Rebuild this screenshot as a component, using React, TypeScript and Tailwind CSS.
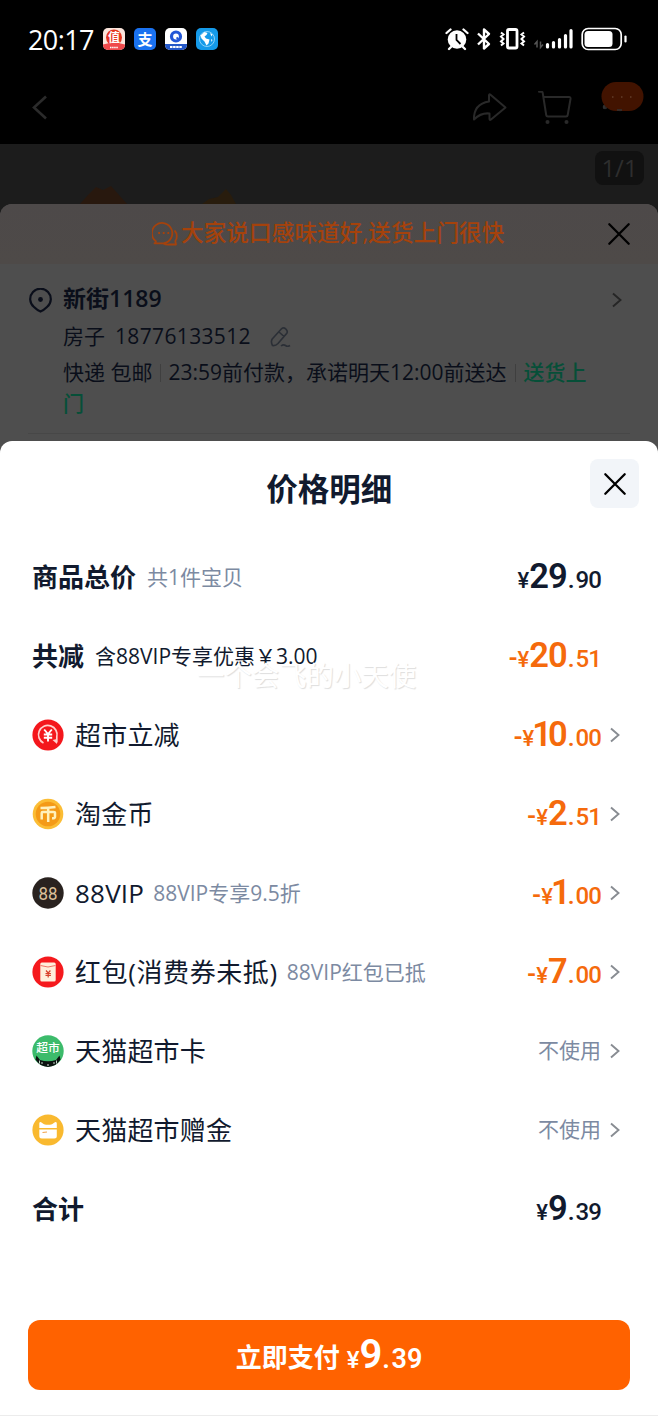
import type { ReactNode } from "react";
import clsx from "clsx";

type Row = {
  label: string;
  note?: string;
  noteDark?: boolean;
  strong?: boolean;
  icon?: ReactNode;
  minus?: boolean;
  price?: [string, string];
  text?: string;
  link?: boolean;
};

const CJK = "Noto Sans CJK SC";

const CouponIcon = () => (
  <svg width="32" height="32" viewBox="0 0 32 32">
    <circle cx="16" cy="16" r="15.6" fill="#f4171c" />
    <path d="M11.500 24A9.300 9.300 0 1 1 24.800 18V23.500" fill="none" stroke="#ffd0cc" strokeWidth="1.700" />
    <path d="M20.500 21l4.500 4V20" fill="#ffd0cc" />
    <path d="M12.200 10.500l3.800 4.500 3.800-4.500M16 15v7.500M11.800 15.500h8.400M11.800 18.700h8.400" fill="none" stroke="#fff" strokeWidth="1.900" />
  </svg>
);

const CoinIcon = () => (
  <svg width="32" height="32" viewBox="0 0 32 32">
    <circle cx="16" cy="16" r="15.3" fill="#fbbd35" />
    <circle cx="16" cy="16" r="12.3" fill="#f49a17" />
    <path d="M8.500 10Q16 10 23.500 9M9.700 21.500v-6.500q0-1 1-1H21.500q1.500 0 1.500 1V19q0 1.500-3 1.300M16.200 10V24" fill="none" stroke="#fff1bd" strokeWidth="2.500" />
  </svg>
);

const VipIcon = () => (
  <svg width="32" height="32" viewBox="0 0 32 32">
    <circle cx="16" cy="16" r="15.7" fill="#29221f" />
    <text x="6.500" y="22.500" fontFamily="Roboto" fontSize="18.500" textLength="19" lengthAdjust="spacingAndGlyphs" fill="#dcc09a">88</text>
  </svg>
);

const RedPacketIcon = () => (
  <svg width="32" height="32" viewBox="0 0 32 32">
    <circle cx="16" cy="16" r="15.6" fill="#f5191d" />
    <rect x="8.300" y="6.500" width="15.400" height="19" rx="1.500" fill="#ffeedb" />
    <path d="M8.500 9.500Q16 12.500 23.500 9.500" fill="none" stroke="#ef7466" strokeWidth="1" />
    <path d="M14 14.500l2.200 2.500 2.200-2.500M16.200 17v4.500M13.500 17.500h5.400M13.500 19.400h5.400" fill="none" stroke="#d9402b" strokeWidth="1.200" />
  </svg>
);

const MarketCardIcon = () => (
  <svg width="32" height="32" viewBox="0 0 32 32">
    <circle cx="16" cy="16" r="15.7" fill="#3cbb6b" />
    <path d="M4.500 20.500l3.500 4.500Q16 27.500 24 25l3.500-4.500 1 4A15.500 15.500 0 0 1 16 32 15.500 15.500 0 0 1 3.500 24.500z" fill="#0c1210" />
    <path d="M7.500 25.500v3M10 27v2M22 27v2M24.500 25.500v3" stroke="#d9efe0" strokeWidth=".9" />
    <circle cx="16" cy="30" r=".8" fill="#fff" />
    <text x="16" y="16.500" textAnchor="middle" fontFamily={CJK} fontSize="11.800" fontWeight="500" fill="#fff">超市</text>
  </svg>
);

const GiftCardIcon = () => (
  <svg width="32" height="32" viewBox="0 0 32 32">
    <circle cx="16" cy="16" r="15.6" fill="#f9b92f" />
    <path d="M7.300 9.500q0-2.200 1.800-1.200L12 10.300q4 1 8 0l2.900-2q1.900-1 1.900 1.200V14H7.300z" fill="#fff" />
    <path d="M7.300 15.500h17.500V22q0 2.500-2.500 2.500H9.800q-2.500 0-2.500-2.500z" fill="#fff" />
    <path d="M10.500 18.500l4.500-.5" stroke="#f2a24a" strokeWidth="1.200" />
  </svg>
);

const rows: Row[] = [
  { label: "商品总价", note: "共1件宝贝", strong: true, price: ["29", "90"] },
  { label: "共减", note: "含88VIP专享优惠￥3.00", noteDark: true, strong: true, minus: true, price: ["20", "51"] },
  { label: "超市立减", icon: <CouponIcon />, minus: true, price: ["10", "00"], link: true },
  { label: "淘金币", icon: <CoinIcon />, minus: true, price: ["2", "51"], link: true },
  { label: "88VIP", note: "88VIP专享9.5折", icon: <VipIcon />, minus: true, price: ["1", "00"], link: true },
  { label: "红包(消费券未抵)", note: "88VIP红包已抵", icon: <RedPacketIcon />, minus: true, price: ["7", "00"], link: true },
  { label: "天猫超市卡", icon: <MarketCardIcon />, text: "不使用", link: true },
  { label: "天猫超市赠金", icon: <GiftCardIcon />, text: "不使用", link: true },
  { label: "合计", strong: true, price: ["9", "39"] },
];

const Chevron = ({ className }: { className?: string }) => (
  <svg className={className} width="10" height="16" viewBox="0 0 10 16" fill="none" stroke="currentColor" strokeWidth="1.9">
    <path d="M1 1.500L8.500 8L1 14.500" />
  </svg>
);

const Cross = () => (
  <svg width="24" height="24" viewBox="0 0 24 24" fill="none" stroke="currentColor" strokeWidth="2.3" strokeLinecap="round">
    <path d="M2.300 2.300L21.700 21.700M21.700 2.300L2.300 21.700" />
  </svg>
);

const Price = ({ minus, value }: { minus?: boolean; value: [string, string] }) => (
  <div
    className={clsx(
      "flex items-baseline font-[Roboto,sans-serif] font-semibold leading-none",
      minus ? "text-[#f56a0c]" : "text-[#111a2e]"
    )}
  >
    {minus && <span className="text-[25px]">-</span>}
    <span className="text-[22px] font-medium">¥</span>
    <span className="text-[34.5px]">
      {/* the digit 1 is narrower than the others */}
      {value[0].split("").map((digit, i) => (
        <span key={i} className={digit === "1" ? "-ml-[2px] tracking-[-4px]" : "tracking-[-1px]"}>
          {digit}
        </span>
      ))}
    </span>
    <span className="ml-px text-[24px] tracking-[1px]">.</span>
    <span className="text-[24px] font-medium tracking-[-0.9px]">{value[1]}</span>
  </div>
);

const StatusBar = () => (
  <div className="flex h-[78px] items-center justify-between pl-7 pr-[31px] text-white">
    <div className="flex items-center gap-[9px]">
      <span className="w-[66px] whitespace-nowrap text-[27px] font-medium leading-none tracking-[-0.6px]">20:17</span>
      <svg width="22" height="22" viewBox="0 0 22 22">
        <rect width="22" height="22" rx="5" fill="#fbe5dc" />
        <circle cx="11" cy="9.5" r="8" fill="#e5351f" />
        <path d="M0 16.500Q11 13 22 16.500V17a5 5 0 0 1-5 5H5a5 5 0 0 1-5-5z" fill="#ef4a4c" />
        <text x="11" y="14" textAnchor="middle" fontFamily={CJK} fontSize="12" fontWeight="700" fill="#fff">值</text>
        <path d="M7 19.500h8" stroke="#fff" strokeWidth="1.500" strokeDasharray="1.5 .6" />
      </svg>
      <svg width="22" height="22" viewBox="0 0 22 22" overflow="visible">
        <rect width="22" height="22" rx="5" fill="#1a72f0" />
        <text x="11" y="16.500" textAnchor="middle" fontFamily={CJK} fontSize="15" fontWeight="700" fill="#fff">支</text>
      </svg>
      <svg width="22" height="22" viewBox="0 0 22 22">
        <rect width="22" height="22" rx="5" fill="#fff" />
        <path d="M0 16h22v1a5 5 0 0 1-5 5H5a5 5 0 0 1-5-5z" fill="#2458c8" />
        <circle cx="11" cy="8.5" r="4.5" fill="#fff" stroke="#2357d6" strokeWidth="3.2" />
        <path d="M11.500 9.500l2 1.500" stroke="#2357d6" strokeWidth="1.800" />
        <path d="M5 19h12" stroke="#fff" strokeWidth="2" strokeDasharray="2.5 .6" />
      </svg>
      <svg width="22" height="22" viewBox="0 0 22 22">
        <rect width="22" height="22" rx="5" fill="#159ae9" />
        <circle cx="11" cy="11" r="7.5" fill="none" stroke="#a8defb" strokeWidth=".8" />
        <path d="M4.500 7.500l4-3.500 3 1-1 2-2 1.500 1.500 2 3.500 1-1 4-2 2-2-4-3-3zM14 5l2.500 1.500-1 2zM15 11l1.500 1-1 2z" fill="#fff" />
      </svg>
    </div>
    <svg width="182" height="24" viewBox="0 0 182 24" fill="none" stroke="#fff">
      <circle cx="12" cy="12.500" r="9.300" fill="#fff" stroke="none" />
      <path d="M1.500 6L5.500 2.500M18.500 2.500l4 3.500M6 20l-2 2M18 20l2 2" strokeWidth="2.300" strokeLinecap="round" />
      <path d="M11.500 7V13l4 4" stroke="#000" strokeWidth="1.800" />
      <path d="M33 6.500L44 17L39 21.500V2.500L44 7L33 17.500" strokeWidth="2.400" strokeLinejoin="round" />
      <rect x="62.500" y="2.500" width="9.500" height="18.500" rx="1.500" strokeWidth="2.800" />
      <path d="M56 5.500l2.500 2-2.500 2 2.500 2.500-2.500 2.500 2.500 2-2.500 2M79 5.500l-2.500 2 2.500 2-2.500 2.500 2.500 2.500-2.500 2 2.500 2" strokeWidth="2" />
      <path d="M92 20.500v-6l-2.500 3M95.500 14.500v6l2.500-3" stroke="#555" strokeWidth="1.500" />
      <path d="M102.500 17.500v2.500M108.500 15.500v4.500M114.500 12.500v7.500M120.500 8.500v11.500M126 3.500v16.500" strokeWidth="3.200" strokeLinecap="round" />
      <rect x="137.200" y="1.500" width="39" height="21" rx="6" strokeWidth="1.700" />
      <rect x="139.500" y="4" width="28" height="16" rx="3.500" fill="#fff" stroke="none" />
      <path d="M180.500 9.500v5" strokeWidth="2.200" strokeLinecap="round" />
    </svg>
  </div>
);

const NavBar = () => (
  <div className="relative flex h-[66px] items-start justify-between pl-[31px] pr-[85px] pt-3">
    <svg className="mt-[5px]" width="17" height="25" viewBox="0 0 17 25" fill="none" stroke="#2b2b2b" strokeWidth="2.6">
      <path d="M15 1.500L3 12.500L15 23.500" />
    </svg>
    <div className="flex gap-[31px] pt-px">
      <svg width="35" height="33" viewBox="0 0 35 33" fill="none" stroke="#292929" strokeWidth="2" strokeLinejoin="round">
        <path d="M17 4.500q0-2 1.500-.7L33.500 16.500 19 28.500q-1.500 1.200-1.500-.7V22.500Q9 21.500 2 28.500 1.500 13 17 10.500z" />
      </svg>
      <svg width="35" height="35" viewBox="0 0 35 35" fill="none" stroke="#292929" strokeWidth="2" strokeLinecap="round" strokeLinejoin="round">
        <path d="M1 .8H3.500q1 0 1.200 1L8.200 24q.2 1.500 1.700 1.500H28q1.500 0 1.700-1.500L32.500 8q.3-2-1.500-2H6" />
        <circle cx="9.500" cy="31" r="2" fill="#292929" stroke="none" />
        <circle cx="28.500" cy="31" r="2" fill="#292929" stroke="none" />
      </svg>
    </div>
    <svg className="absolute right-[14px] top-1" width="44" height="31" viewBox="0 0 44 31">
      <circle cx="5" cy="25" r="2.3" fill="#292929" />
      <circle cx="20" cy="27" r="2.3" fill="#292929" />
      <rect x="1.500" width="42" height="29" rx="14.500" fill="#421300" />
      <path d="M4 23.500v3M17 28h5" stroke="#333" strokeWidth="1.500" />
      <path d="M12 15h1.500M21 15h1.500M30 15h1.500" stroke="#73523f" strokeWidth="1.200" />
    </svg>
  </div>
);

const DeliveryCard = () => (
  <div className="h-[237px] overflow-hidden rounded-t-[12px] bg-[#4e4e4e] text-[#0a0e1a]">
    <div className="flex h-[60px] items-center justify-between bg-gradient-to-b from-[#4d4949] to-[#4e4a48] pb-px pl-[152px] pr-[27px]">
      <div className="flex items-center gap-[3px] text-[#a5420c]">
        <svg width="26" height="26" viewBox="0 0 26 26" fill="none" stroke="currentColor" strokeWidth="1.8" strokeLinejoin="round">
          <path d="M2.500 22.300q1.500-.8 1.400-2A10.200 10.200 0 1 1 11.500 22.300z" />
          <path d="M22.500 9.500q2.500 2.500 2.300 6 0 2.500-1.500 4.500l.7 3.500h-6.500q-4 .5-6-1.200" />
          <path d="M6.200 12h1.800M10.800 12h1.800M15.400 12h1.800" strokeWidth="2" />
        </svg>
        <span className="whitespace-nowrap text-[22.7px] font-medium leading-none">大家说口感味道好,送货上门很快</span>
      </div>
      <span className="text-black">
        <Cross />
      </span>
    </div>
    <div className="flex pl-7 pr-9 pt-[19px]">
      <svg className="mt-[5px] shrink-0" width="25" height="25" viewBox="0 0 25 25" fill="none" stroke="currentColor" strokeWidth="2.2">
        <path d="M12.500 23.500Q9 22 6 19A10.300 10.300 0 1 1 19 19Q16 22 12.500 23.500z" />
        <circle cx="12.500" cy="11.500" r="2.4" fill="currentColor" stroke="none" />
      </svg>
      <div className="ml-[10px] w-[535px]">
        <div className="flex h-[31px] items-center text-[23px] font-semibold">新街1189</div>
        <div className="mt-[7px] flex h-[31px] items-center text-[21px]">
          <span>房子</span>
          <span className="ml-[10px] tracking-[0.35px]">18776133512</span>
          <svg className="ml-[19px]" width="21" height="22" viewBox="0 0 21 22" fill="none" stroke="#2b2f36" strokeWidth="1.6">
            <path d="M2.200 13L11.500 2.800q2-2 4.200 0t1.300 4.200L8 17.500q-2.500 2.500-5.500 2-2-3.500-.3-6.500zM9 6l5 4.500M11 20q2.500-2 4.500-.5t4.500 0" />
          </svg>
        </div>
        <p className="mt-[5px] text-[21px] leading-[31px]">
          快递 包邮
          <span className="mx-[7.5px] inline-block h-[18px] w-px bg-[#3f3f3f] align-[-2px]" />
          23:59前付款，承诺明天12:00前送达
          <span className="mx-[8px] inline-block h-[18px] w-px bg-[#3f3f3f] align-[-2px]" />
          <span className="font-medium text-[#064f38]">送货上门</span>
        </p>
      </div>
      <Chevron className="ml-auto mt-[9px] shrink-0 text-[#262626]" />
    </div>
    <div className="mx-7 mt-[14px] h-px bg-[#474747]" />
  </div>
);

const PriceRow = ({ row }: { row: Row }) => (
  <div className="flex h-[79px] items-center pl-8 pr-[38px]">
    {row.icon && <div className="mr-[11px] shrink-0">{row.icon}</div>}
    <span
      className={clsx(
        "text-[26px] leading-none text-[#111a2e]",
        row.strong && "font-semibold",
        row.icon && (row.label.includes("(") ? "tracking-[0.6px]" : "tracking-[0.2px]")
      )}
    >
      {row.label}
    </span>
    {row.note && (
      <span
        className={clsx(
          "mt-px text-[21px] leading-none",
          row.icon ? "ml-[9px]" : "ml-[11px]",
          row.noteDark ? "text-[#111a2e]" : "text-[#7c8aa2]"
        )}
      >
        {row.note}
      </span>
    )}
    <div className="ml-auto flex items-center">
      {row.price && <Price minus={row.minus} value={row.price} />}
      {row.text && <span className="text-[21px] leading-none text-[#7c8aa2]">{row.text}</span>}
      {row.link ? <Chevron className="ml-[9px] text-[#888c92]" /> : <span className="w-[19px]" />}
    </div>
  </div>
);

const PriceSheet = () => (
  <div className="relative h-[975px] rounded-t-[12px] bg-white">
    <div className="flex h-24 items-start justify-between pl-[19px] pr-[18.5px] pt-[18px]">
      <span className="w-[49px]" />
      <h1 className="mt-[14px] text-[31.5px] font-bold leading-none text-[#111a2e]">价格明细</h1>
      <button className="flex h-[49px] w-[49px] items-center justify-center rounded-[8px] bg-[#f2f5f9] text-black">
        <Cross />
      </button>
    </div>
    {rows.map((row) => (
      <PriceRow key={row.label} row={row} />
    ))}
    <button className="mx-7 mt-[71.5px] flex h-[70px] w-[602px] items-center justify-center rounded-[12px] bg-[#ff6200] text-white">
      <span className="mt-[5px] text-[26px] font-semibold leading-none">立即支付</span>
      <span className="ml-[7px] flex items-baseline font-[Roboto,sans-serif] font-semibold leading-none">
        <span className="text-[24px] font-medium">¥</span>
        <span className="text-[40px]">9</span>
        <span className="text-[27px] tracking-[1.5px]">.</span>
        <span className="text-[27px]">39</span>
      </span>
    </button>
    <div className="mt-[25.5px] h-px bg-[#ececec]" />
    {/* faint user name stamped over the sheet */}
    <span className="pointer-events-none absolute left-[197px] top-[221px] whitespace-nowrap text-[27.4px] leading-none text-white [text-shadow:1px_1px_1px_#dedede]">
      一个会飞的小天使
    </span>
  </div>
);

export default function App() {
  return (
    <div className="h-[1416px] w-[658px] overflow-hidden bg-[#1c1c1c] font-['Open_Sans','Noto_Sans_CJK_SC',sans-serif]">
      <div className="h-36 bg-black">
        <StatusBar />
        <NavBar />
      </div>
      <div className="relative flex h-[60px] justify-end pr-[14px] pt-[7px]">
        <span className="flex h-[34px] w-[49px] items-center justify-center rounded-[8px] bg-[#111] text-[24px] text-[#2e2e2e]">1/1</span>
        <svg className="absolute bottom-0 left-[78px]" width="162" height="24" viewBox="0 0 162 24">
          <path d="M2 24l8-9 8-8 7 3 8-4 8 9 8 9z" fill="#28180e" />
          <path d="M124 24l7-5 9-2 8-8 5 6 5 9z" fill="#281c0d" />
        </svg>
      </div>
      <DeliveryCard />
      <div className="bg-[#4e4e4e]">
        <PriceSheet />
      </div>
    </div>
  );
}
